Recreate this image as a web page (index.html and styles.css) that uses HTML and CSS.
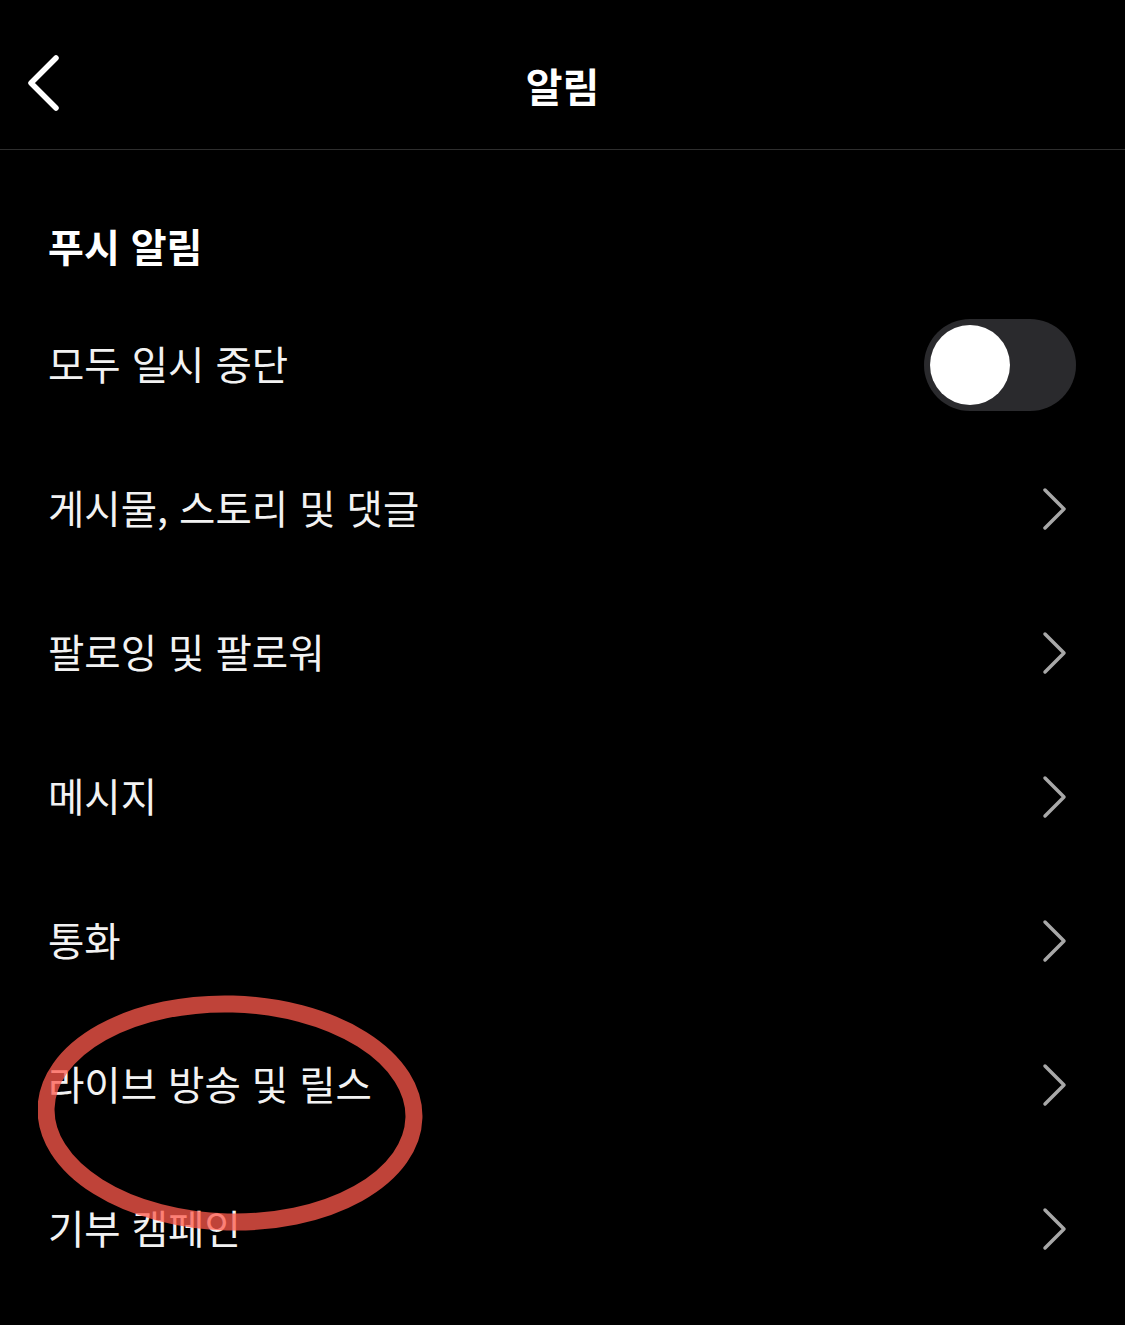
FILE: index.html
```html
<!DOCTYPE html>
<html lang="ko">
<head>
<meta charset="utf-8">
<link rel="stylesheet" href="styles.css">
</head>
<body>
<div class="screen">
  <header class="topbar">
    <svg class="back" width="40" height="60" viewBox="0 0 40 60"><path d="M32 5 L7 30 L32 55" fill="none" stroke="#fff" stroke-width="5.5" stroke-linecap="round" stroke-linejoin="round"/></svg>
    <h1 class="title">알림</h1>
  </header>
  <main class="content">
    <h2 class="section">푸시 알림</h2>
    <div class="row">
      <span class="label">모두 일시 중단</span>
      <span class="toggle"><span class="knob"></span></span>
    </div>
    <div class="row"><span class="label">게시물, 스토리 및 댓글</span><svg class="chev" viewBox="0 0 30 44"><path d="M5 3 L24 22 L5 41" /></svg></div>
    <div class="row"><span class="label">팔로잉 및 팔로워</span><svg class="chev" viewBox="0 0 30 44"><path d="M5 3 L24 22 L5 41" /></svg></div>
    <div class="row"><span class="label">메시지</span><svg class="chev" viewBox="0 0 30 44"><path d="M5 3 L24 22 L5 41" /></svg></div>
    <div class="row"><span class="label">통화</span><svg class="chev" viewBox="0 0 30 44"><path d="M5 3 L24 22 L5 41" /></svg></div>
    <div class="row"><span class="label">라이브 방송 및 릴스</span><svg class="chev" viewBox="0 0 30 44"><path d="M5 3 L24 22 L5 41" /></svg></div>
    <div class="row"><span class="label">기부 캠페인</span><svg class="chev" viewBox="0 0 30 44"><path d="M5 3 L24 22 L5 41" /></svg></div>
  </main>
  <svg class="mark" width="420" height="260" viewBox="0 0 420 260"><ellipse cx="192" cy="125" rx="184" ry="109" fill="none" stroke="rgb(255,90,76)" stroke-opacity="0.75" stroke-width="17" transform="rotate(1.5 192 125)"/></svg>
</div>
</body>
</html>
```

FILE: styles.css
```css
html, body { margin: 0; padding: 0; background: #000; }
body { font-family: "Noto Sans CJK KR", "Noto Sans", sans-serif; color: #fff; }
.screen { position: relative; width: 1125px; height: 1325px; overflow: hidden; background: #000; }
.topbar { height: 149px; border-bottom: 1px solid #2e2e2e; display: flex; align-items: center; justify-content: center; position: relative; }
.back { position: absolute; left: 24px; top: 53px; }
.title { margin: 0; font-size: 40px; font-weight: 700; letter-spacing: 0; padding-top: 20px; }
.content { padding: 0 48px; }
.section { margin: 59px 0 12px; font-size: 39px; font-weight: 700; height: 72px; line-height: 72px; }
.row { display: flex; align-items: center; justify-content: space-between; height: 144px; }
.label { font-size: 39.5px; font-weight: 400; color: #f2f2f2; padding-bottom: 6px; }
.toggle { width: 152px; height: 92px; border-radius: 46px; background: #2a2a2d; display: flex; align-items: center; padding-left: 6px; box-sizing: border-box; margin-right: 1px; }
.knob { width: 80px; height: 80px; border-radius: 50%; background: #fff; }
.chev { width: 30px; height: 44px; margin-right: 7px; }
.chev path { fill: none; stroke: #a8a8a8; stroke-width: 3.5; stroke-linecap: round; stroke-linejoin: round; }
.mark { position: absolute; left: 38px; top: 988px; }
```
